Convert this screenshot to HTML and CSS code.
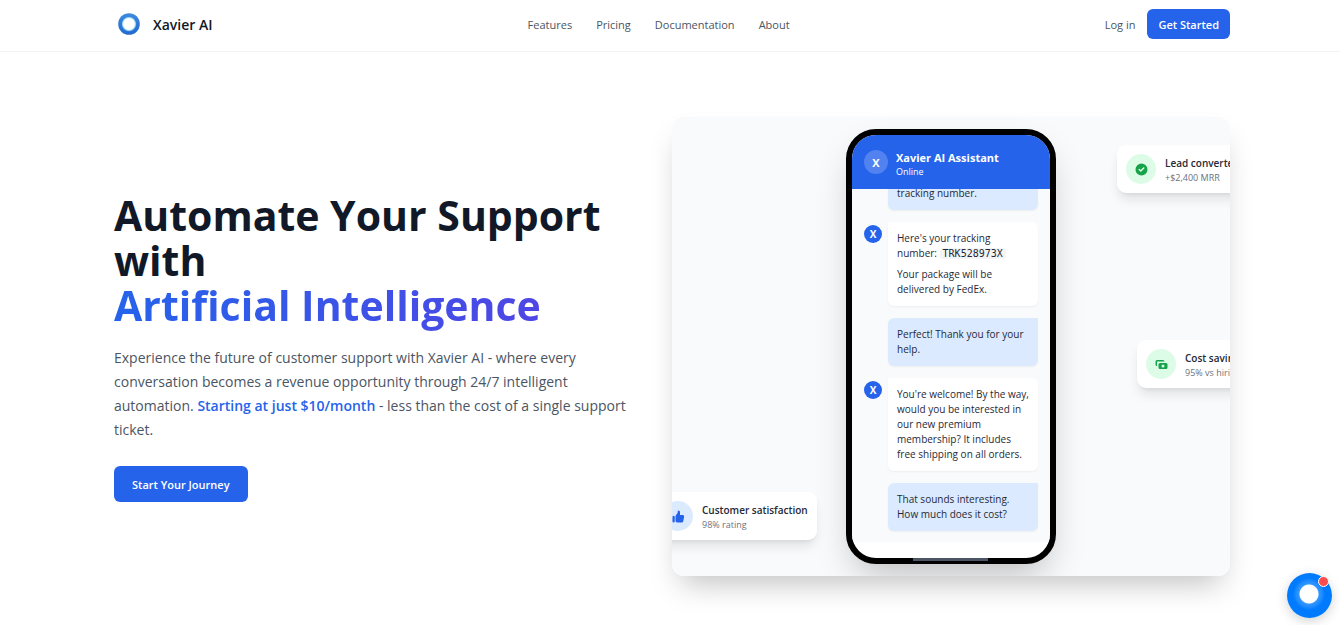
FILE: index.html
```html
<!DOCTYPE html>
<html lang="en">
<head>
<meta charset="utf-8">
<meta name="viewport" content="width=device-width, initial-scale=1">
<title>Xavier AI</title>
<link rel="stylesheet" href="styles.css">
</head>
<body>
<header class="site-header">
  <div class="container header-row">
    <a class="brand" href="#">
      <svg class="brand-mark" viewBox="0 0 30 30" aria-hidden="true">
        <defs>
          <linearGradient id="ring" x1="0" y1="0" x2="0" y2="1"><stop offset="0" stop-color="#3f8ae0"/><stop offset="1" stop-color="#2269cf"/></linearGradient>
          <radialGradient id="core"><stop offset=".72" stop-color="#fff"/><stop offset=".86" stop-color="#a9e0f5"/><stop offset="1" stop-color="#3b8be0"/></radialGradient>
        </defs>
        <circle cx="15" cy="15" r="10.8" fill="url(#ring)"/>
        <circle cx="15" cy="15" r="7.4" fill="url(#core)"/>
      </svg>
      <span>Xavier AI</span>
    </a>
    <nav class="nav" aria-label="Main">
      <a href="#features">Features</a>
      <a href="#pricing">Pricing</a>
      <a href="#docs">Documentation</a>
      <a href="#about">About</a>
    </nav>
    <div class="account">
      <a class="login" href="#login">Log in</a>
      <button class="btn btn-small" type="button">Get Started</button>
    </div>
  </div>
</header>

<main class="container hero">
  <section class="pitch">
    <h1>Automate Your Support<br>with<br><span class="gradient">Artificial Intelligence</span></h1>
    <p>Experience the future of customer support with Xavier AI - where every conversation becomes a revenue opportunity through 24/7 intelligent automation. <strong>Starting at just $10/month</strong> - less than the cost of a single support ticket.</p>
    <button class="btn btn-large" type="button">Start Your Journey</button>
  </section>

  <section class="stage" aria-label="Product demo">
    <div class="clip">
      <div class="phone">
        <div class="screen">
          <div class="chat-head">
            <span class="avatar avatar-head">X</span>
            <div>
              <div class="chat-title">Xavier AI Assistant</div>
              <div class="chat-status">Online</div>
            </div>
          </div>
          <div class="chat">
            <div class="bubble user tail">tracking number.</div>
            <div class="row">
              <span class="avatar">X</span>
              <div class="bubble bot">
                <p>Here's your tracking number: <code>TRK528973X</code></p>
                <p>Your package will be delivered by FedEx.</p>
              </div>
            </div>
            <div class="bubble user">Perfect! Thank you for your help.</div>
            <div class="row">
              <span class="avatar">X</span>
              <div class="bubble bot">You're welcome! By the way, would you be interested in our new premium membership? It includes free shipping on all orders.</div>
            </div>
            <div class="bubble user">That sounds interesting. How much does it cost?</div>
          </div>
        </div>
        <span class="home-bar"></span>
      </div>

      <div class="toast toast-lead">
        <span class="badge green">
          <svg viewBox="0 0 20 20" aria-hidden="true"><path fill="currentColor" fill-rule="evenodd" d="M10 18a8 8 0 100-16 8 8 0 000 16zm3.707-9.293a1 1 0 00-1.414-1.414L9 10.586 7.707 9.293a1 1 0 00-1.414 1.414l2 2a1 1 0 001.414 0l4-4z"/></svg>
        </span>
        <div><div class="toast-title">Lead converted</div><div class="toast-note">+$2,400 MRR</div></div>
      </div>
      <div class="toast toast-cost">
        <span class="badge green">
          <svg viewBox="0 0 20 20" aria-hidden="true"><path fill="currentColor" fill-rule="evenodd" d="M4 4a2 2 0 00-2 2v4a2 2 0 002 2V6h10a2 2 0 00-2-2H4zm2 6a2 2 0 012-2h8a2 2 0 012 2v4a2 2 0 01-2 2H8a2 2 0 01-2-2v-4zm6 4a2 2 0 100-4 2 2 0 000 4z"/></svg>
        </span>
        <div><div class="toast-title">Cost savings</div><div class="toast-note">95% vs hiring</div></div>
      </div>
      <div class="toast toast-rating">
        <span class="badge blue">
          <svg viewBox="0 0 20 20" aria-hidden="true"><path fill="currentColor" d="M2 10.500a1.500 1.500 0 113 0v6a1.500 1.500 0 01-3 0v-6zM6 10.333v5.430a2 2 0 001.106 1.790l.050.025A4 4 0 008.943 18h5.416a2 2 0 001.962-1.608l1.200-6A2 2 0 0015.560 8H12V4a2 2 0 00-2-2 1 1 0 00-1 1v.667a4 4 0 01-.800 2.400L6.800 7.933a4 4 0 00-.800 2.400z"/></svg>
        </span>
        <div><div class="toast-title">Customer satisfaction</div><div class="toast-note">98% rating</div></div>
      </div>
    </div>
  </section>
</main>

<button class="launcher" type="button" aria-label="Open chat"><span class="dot"></span></button>
</body>
</html>
```

FILE: styles.css
```css
* { box-sizing: border-box; }
body {
  margin: 0;
  min-height: 100vh;
  overflow-x: hidden;
  background: #fff;
  color: #111827;
  font-family: "Open Sans", "Noto Sans", sans-serif;
  font-size: 11px;
}
a { color: inherit; text-decoration: none; }
p { margin: 0; }
button { font: inherit; border: 0; cursor: pointer; }

.container { max-width: 1156px; margin: 0 auto; padding: 0 18px 0 22px; }

.site-header { border-bottom: 1px solid #f3f4f6; }
.header-row { display: flex; align-items: center; justify-content: space-between; padding-top: 9px; padding-bottom: 12px; }
.brand { display: flex; align-items: center; gap: 9px; font-size: 14px; font-weight: 600; }
.brand-mark { width: 30px; height: 30px; }
.nav { display: flex; gap: 24px; padding-top: 1px; font-size: 11px; color: #4b5563; }
.account { display: flex; align-items: center; gap: 12px; color: #4b5563; }
.btn { background: #2563eb; color: #fff; border-radius: 6px; font-weight: 600; white-space: nowrap; }
.btn-small { height: 30px; padding: 0 11px; }
.btn-large { height: 36px; padding: 0 18px; }

.hero { display: grid; grid-template-columns: 1fr 1fr; align-items: center; padding-top: 65px; padding-bottom: 48px; }
.pitch { padding-top: 2px; padding-right: 36px; }
h1 { margin: 0 0 18px; font-size: 41px; line-height: 45px; font-weight: 700; white-space: nowrap; }
.gradient { display: inline-block; margin-bottom: -6px; padding-bottom: 6px; vertical-align: top; background: linear-gradient(to right, #2563eb, #4f46e5); background-clip: text; -webkit-background-clip: text; color: transparent; }
.pitch p { margin-bottom: 24px; font-size: 14px; line-height: 24px; color: #4b5563; }
.pitch strong { color: #2563eb; font-weight: 600; }

.stage { border-radius: 12px; box-shadow: 0 16px 30px -9px rgba(0, 0, 0, .25); }
.clip { position: relative; display: flex; justify-content: center; padding: 12px; overflow: hidden; border-radius: 12px; background: #f9fafb; }

.phone { position: relative; width: 210px; height: 435px; border: 6px solid #000; border-radius: 30px; background: #000; box-shadow: 0 18px 36px -9px rgba(0, 0, 0, .25); }
.screen { display: flex; flex-direction: column; height: 100%; padding-bottom: 16px; overflow: hidden; border-radius: 24px; background: #fff; }
.home-bar { position: absolute; left: 61px; right: 62px; bottom: -3px; height: 3px; background: #4b5563; }
.chat-head { display: flex; flex: none; align-items: center; gap: 8px; height: 54px; padding: 0 12px; background: #2563eb; color: #fff; }
.chat-title { padding-top: 3px; font-size: 11px; line-height: 16px; font-weight: 700; }
.chat-status { font-size: 9px; line-height: 12px; }
.chat { display: flex; flex: 1; flex-direction: column; justify-content: flex-end; gap: 12px; min-height: 0; padding: 12px 12px 11px; overflow: hidden; background: #f9fafb; }
.row { display: flex; align-items: flex-start; gap: 6px; }
.avatar { display: grid; flex: none; place-items: center; width: 18px; height: 18px; margin-top: 3px; border-radius: 50%; background: #2563eb; color: #fff; font-size: 10px; font-weight: 700; }
.avatar-head { width: 24px; height: 24px; margin: 0; background: #5182ef; font-size: 11px; }
.bubble { width: 150px; flex: none; padding: 9px; border-radius: 6px; color: #1f2937; font-size: 10px; line-height: 15px; box-shadow: 0 1px 2px rgba(0, 0, 0, .05); }
.user { align-self: flex-end; border-top-right-radius: 0; background: #dbeafe; }
.bot { border-top-left-radius: 0; background: #fff; }
.bot p + p { margin-top: 6px; }
code { padding: 0 3px; border-radius: 3px; background: #f3f4f6; font-family: "DejaVu Sans Mono", monospace; font-size: 10px; }

.toast { position: absolute; display: flex; align-items: center; gap: 9px; height: 48px; padding: 0 9px; border-radius: 9px; background: #fff; white-space: nowrap; box-shadow: 0 8px 12px -2px rgba(0, 0, 0, .1), 0 3px 5px -3px rgba(0, 0, 0, .1); }
.toast-lead { top: 28px; left: calc(100% - 113px); }
.toast-cost { top: 223px; left: calc(100% - 93px); }
.toast-rating { top: 375px; left: -18px; }
.badge { display: grid; place-items: center; width: 30px; height: 30px; border-radius: 50%; }
.badge svg { width: 15px; height: 15px; }
.green { background: #dcfce7; color: #16a34a; }
.blue { background: #dbeafe; color: #2563eb; }
.toast-title { color: #1f2937; font-size: 10px; line-height: 16px; font-weight: 600; }
.toast-note { color: #6b7280; font-size: 9px; line-height: 13px; }

.launcher { position: fixed; right: 8px; bottom: 7px; width: 45px; height: 45px; padding: 0; border-radius: 50%; background: radial-gradient(circle at 22px 21px, #fff 9px, #3298ff 10px, #1f8cff 13px, #1586ff 14px, #007bff 16px); box-shadow: 0 3px 12px rgba(0, 0, 0, .18); }
.dot { position: absolute; top: 3px; right: 3px; width: 11px; height: 11px; border: 1px solid #fff; border-radius: 50%; background: #ff4d4f; }
```
